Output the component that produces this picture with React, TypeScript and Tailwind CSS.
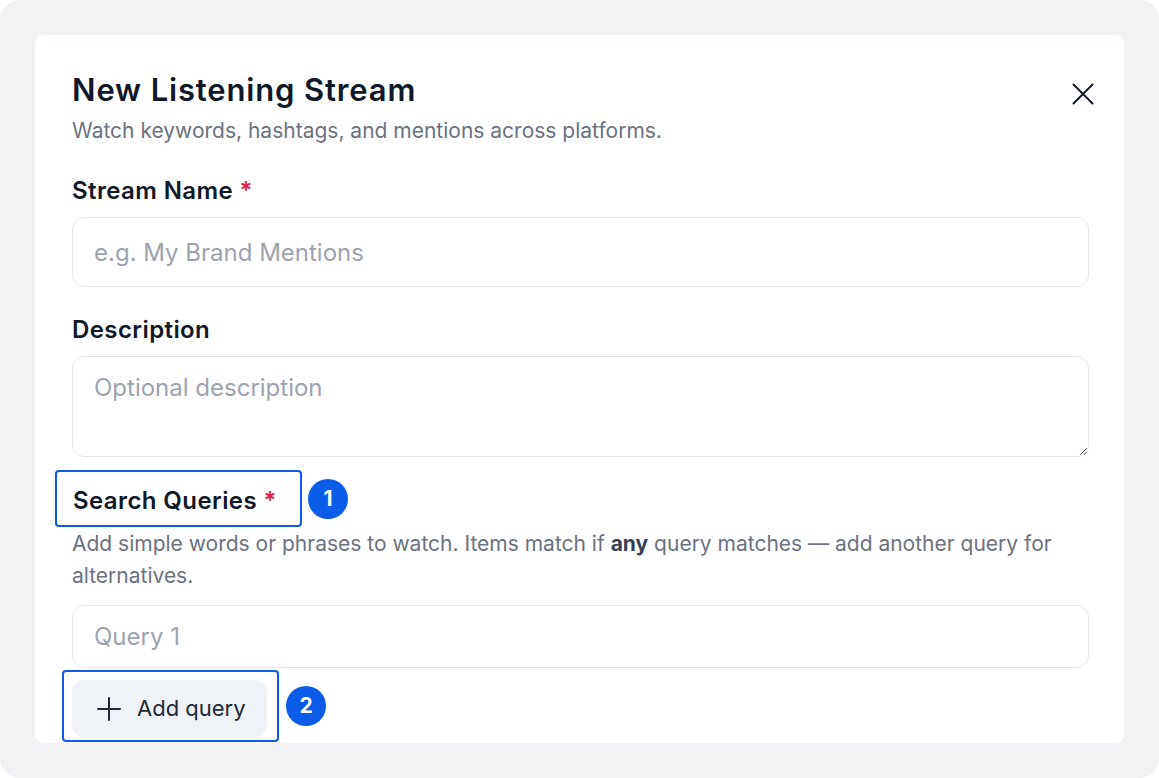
export default function App() {
  return (
    <div className="w-[1159px] h-[778px] bg-white" style={{ fontFamily: 'Inter, "Noto Sans", sans-serif' }}>
      <div className="w-full h-full bg-[#f1f2f4] rounded-[20px] p-[35px]">
        <div className="h-full bg-white rounded-lg overflow-hidden pl-[37px] pr-[35px] pt-[35px]">
          {/* Header */}
          <div className="flex justify-between items-start">
            <div>
              <h1 className="text-[31px] leading-[40px] font-semibold text-[#111827] tracking-[0.85px]">New Listening Stream</h1>
              <p className="mt-[7px] text-[21px] leading-[28px] text-[#6b7280]">Watch keywords, hashtags, and mentions across platforms.</p>
            </div>
            <button className="mt-[13px] -mr-[5px] text-[#111827]">
              <svg width="22" height="22" viewBox="0 0 22 22" fill="none" stroke="currentColor" strokeWidth="2" strokeLinecap="round">
                <path d="M1.5 1.5 L20.5 20.5 M20.5 1.5 L1.5 20.5" />
              </svg>
            </button>
          </div>

          {/* Stream Name */}
          <label className="mt-[30px] block text-[24px] leading-[32px] font-semibold text-[#111827] tracking-[0.4px]">
            Stream Name <span className="text-[#e11d48]">*</span>
          </label>
          <input
            type="text"
            placeholder="e.g. My Brand Mentions"
            className="mt-[10px] block w-full h-[70px] px-[21px] border border-[#e5e7eb] rounded-xl text-[24px] placeholder:text-[#9ca3af] outline-none"
          />

          {/* Description */}
          <label className="mt-[27px] block text-[24px] leading-[32px] font-semibold text-[#111827] tracking-[0.4px]">Description</label>
          <textarea
            placeholder="Optional description"
            className="mt-[10px] block w-full h-[101px] px-[21px] pt-[15px] border border-[#e5e7eb] rounded-xl text-[24px] leading-[32px] placeholder:text-[#9ca3af] outline-none"
          />

          {/* Search Queries */}
          <div className="mt-[13px] flex items-center">
            <div className="-ml-[17px] h-[57px] w-[247px] flex items-center pl-[16px] pt-[4px] border-2 border-[#0b5ce6] rounded-[4px]">
              <span className="text-[24px] leading-[32px] font-semibold text-[#111827] tracking-[0.4px]">
                Search Queries <span className="text-[#e11d48]">*</span>
              </span>
            </div>
            <div className="ml-[6px] w-[40px] h-[40px] rounded-full bg-[#0b5ce6] text-white flex items-center justify-center text-[21px] font-bold">1</div>
          </div>
          <p className="mt-[1px] text-[21px] leading-[32px] text-[#6b7280]">
            Add simple words or phrases to watch. Items match if <b className="font-bold text-[#374151]">any</b> query matches — add another query for alternatives.
          </p>
          <input
            type="text"
            placeholder="Query 1"
            className="mt-[13px] block w-full h-[63px] px-[21px] border border-[#e5e7eb] rounded-xl text-[24px] placeholder:text-[#9ca3af] outline-none"
          />
          <div className="mt-[2px] flex items-center">
            <div className="-ml-[10px] pl-[8px] pr-[10px] pt-[8px] pb-[3px] border-2 border-[#0b5ce6] rounded-[4px]">
              <button className="h-[57px] w-[195px] bg-[#eff2f6] rounded-xl flex items-center pl-[25px] gap-[16px] text-[#1f2937] text-[22px]">
                <svg width="24" height="24" viewBox="0 0 24 24" fill="none" stroke="currentColor" strokeWidth="2" strokeLinecap="round">
                  <path d="M12 1 V23 M1 12 H23" />
                </svg>
                Add query
              </button>
            </div>
            <div className="ml-[7px] w-[40px] h-[40px] rounded-full bg-[#0b5ce6] text-white flex items-center justify-center text-[21px] font-bold">2</div>
          </div>
        </div>
      </div>
    </div>
  );
}
